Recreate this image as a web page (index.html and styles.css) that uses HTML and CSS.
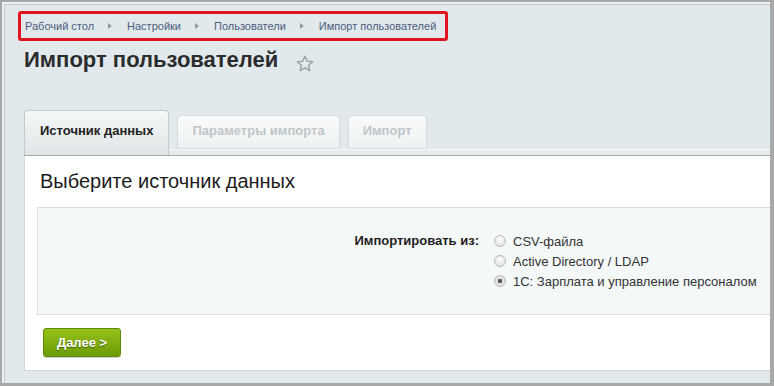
FILE: index.html
```html
<!DOCTYPE html>
<html lang="ru">
<head>
    <meta charset="UTF-8">
    <meta name="viewport" content="width=device-width, initial-scale=1.0">
    <link rel="stylesheet" href="styles.css">
    <title>Импорт пользователей</title>
</head>
<body>
    <div class="window">
        <div class="page">
            <nav class="crumbs">
                <a href="#">Рабочий стол</a>
                <span class="arrow"></span>
                <a href="#">Настройки</a>
                <span class="arrow"></span>
                <a href="#">Пользователи</a>
                <span class="arrow"></span>
                <a href="#">Импорт пользователей</a>
            </nav>
            <div class="content">
                <h1 class="titulo">Импорт пользователей
                    <svg class="star" width="18" height="17" viewBox="0 0 18 17">
                        <path d="M9 1.2l2.3 5 5.4.5-4.1 3.6 1.2 5.3L9 12.8l-4.8 2.8 1.2-5.3L1.3 6.7l5.4-.5z" fill="none" stroke="#9aa3a8" stroke-width="1.5" stroke-linejoin="round"/>
                    </svg>
                </h1>
                <div class="tabs">
                    <span class="tab activo">Источник данных</span>
                    <span class="tab">Параметры импорта</span>
                    <span class="tab">Импорт</span>
                </div>
                <div class="panel">
                    <h2 class="subtitulo">Выберите источник данных</h2>
                    <div class="caja">
                        <div class="etiqueta">Импортировать из:</div>
                        <div class="opciones">
                            <label><input type="radio" name="src"> CSV-файла</label>
                            <label><input type="radio" name="src"> Active Directory / LDAP</label>
                            <label><input type="radio" name="src" checked> 1С: Зарплата и управление персоналом</label>
                        </div>
                    </div>
                    <button class="boton">Далее &gt;</button>
                </div>
            </div>
        </div>
    </div>
</body>
</html>
```

FILE: styles.css
```css
*{
    padding: 0;
    margin: 0;
    box-sizing: border-box;
}
body{
    font-family: "Liberation Sans", Arial, sans-serif;
    width: 774px;
    height: 386px;
    overflow: hidden;
}
.window{
    height: 386px;
    border: solid #a7a9aa;
    border-width: 2px 4px 3px 2px;
    background-color: #eef2f3;
    padding: 2px 0 0 2px;
}
.page{
    height: 100%;
    background-color: #e2e9ec;
    border-top: 1px solid #c2c9cc;
    border-left: 1px solid #c2c9cc;
    overflow: hidden;
}

/* migas */
.crumbs{
    display: inline-flex;
    align-items: center;
    height: 30px;
    margin: 6px 0 0 13px;
    padding-left: 4px;
    border: 3px solid #e0141e;
    border-radius: 3px;
    padding-right: 9px;
    font-size: 11px;
}
.crumbs a{
    color: #4b5c7d;
    text-decoration: none;
}
.arrow{
    width: 0;
    height: 0;
    border-left: 4px solid #959ca1;
    border-top: 3.5px solid transparent;
    border-bottom: 3.5px solid transparent;
    margin: 0 15px 0 14px;
}

.content{
    margin-left: 19px;
}
.titulo{
    font-size: 22px;
    line-height: 28px;
    font-weight: bold;
    color: #2a2c2d;
    margin-top: 5px;
    display: flex;
    align-items: center;
}
.star{
    margin-left: 18px;
    margin-top: 6px;
}

/* pestañas */
.tabs{
    display: flex;
    align-items: flex-end;
    gap: 8px;
    margin-top: 36px;
    border-bottom: 1px solid #a3abae;
    background:
        linear-gradient(#f7f9fa, #f7f9fa) left bottom 5px / 100% 1px no-repeat,
        linear-gradient(#e6ecee, #e6ecee) left bottom / 100% 5px no-repeat;
}
.tab{
    height: 34px;
    line-height: 30px;
    padding: 0 14px 2px;
    margin-bottom: 6px;
    font-size: 13px;
    font-weight: bold;
    color: #c0c6c9;
    border: 1px solid #d3d9dc;
    border-radius: 4px 4px 0 0;
    background: linear-gradient(#fafbfb, #edf1f2);
}
.tab.activo{
    height: 45px;
    line-height: 40px;
    padding: 0 15px 4px;
    margin-bottom: 0;
    color: #222;
    border-color: #c3cacd;
    border-bottom: none;
    background: linear-gradient(#f6f8f8, #dfe5e7);
}

/* panel */
.panel{
    background-color: #fff;
    border-left: 1px solid #d5dbdd;
    border-bottom: 1px solid #d2d8da;
    padding: 14px 0 13px 12px;
    height: 215px;
}
.subtitulo{
    font-size: 20px;
    line-height: 22px;
    font-weight: normal;
    color: #1b1b1b;
    padding-left: 3px;
}
.caja{
    margin-top: 15px;
    height: 108px;
    background-color: #f5f8f9;
    border: 1px solid #d9e0e3;
    border-right: none;
    padding: 23px 0;
    display: grid;
    grid-template-columns: 441px auto;
    column-gap: 15px;
}
.etiqueta{
    text-align: right;
    font-size: 13px;
    font-weight: bold;
    color: #1e1e1e;
    line-height: 20px;
}
.opciones label{
    display: flex;
    align-items: center;
    height: 20px;
    gap: 7px;
    font-size: 13px;
    color: #333;
}
.opciones input{
    appearance: none;
    width: 12px;
    height: 12px;
    border-radius: 50%;
    border: 1px solid #b9bcbe;
    background: radial-gradient(circle at 50% 35%, #fdfdfd, #dcdcdc);
}
.opciones input:checked{
    background: radial-gradient(circle, #555 0 2px, #e6e6e6 2.5px, #d6d6d6);
}
.boton{
    margin: 13px 0 0 6px;
    width: 78px;
    height: 29px;
    border: 1px solid #5d8a08;
    border-radius: 3px;
    background: linear-gradient(#97c11a, #6b9c06);
    color: #fff;
    font-family: inherit;
    font-size: 13px;
    font-weight: bold;
    text-shadow: 0 1px 1px #3f5e00;
    box-shadow: 0 1px 1px rgba(0, 0, 0, 0.2);
}
```
